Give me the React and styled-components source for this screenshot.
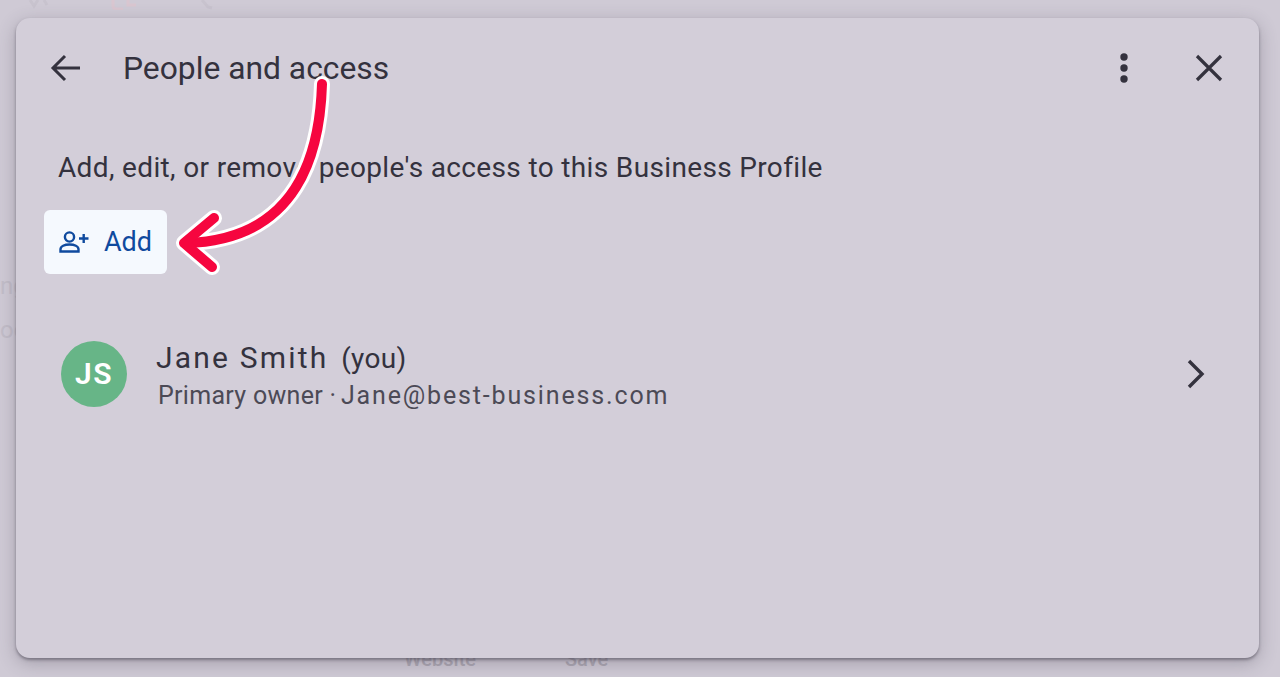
import styled, {createGlobalStyle} from 'styled-components';

const GlobalStyle = createGlobalStyle`
  html, body {
    margin: 0;
    padding: 0;
    background: #cfcad5;
    font-family: Roboto, "Liberation Sans", sans-serif;
  }
`;

const App = () => {
  return (
    <>
      <GlobalStyle />
      <Page>
        <Backdrop aria-hidden="true">
          <GhostTop width="260" height="10" viewBox="0 0 260 10" fill="none" strokeWidth="3">
            <path d="M30 0l4 6 4-6M44 0l3 5" stroke="#c8c3ce" />
            <path d="M113 0v6c0 2 2 3 4 3h6M128 0v5h8" stroke="#d9c6d0" />
            <path d="M202 0l6 7 4 1" stroke="#c8c3ce" />
          </GhostTop>
          <GhostLeft top={272}>ng</GhostLeft>
          <GhostLeft top={316}>oo</GhostLeft>
          <GhostBottom left={404}>Website</GhostBottom>
          <GhostBottom left={565}>Save</GhostBottom>
        </Backdrop>
        <Panel>
          <Header>
            <IconButton aria-label="Back">
              <svg width="32" height="32" viewBox="0 0 32 32" fill="none" stroke="#34323e" strokeWidth="3">
                <path d="M30 16H3M15 4 3 16l12 12" />
              </svg>
            </IconButton>
            <Title>People and access</Title>
            <HeaderActions>
              <IconButton aria-label="More">
                <svg width="10" height="32" viewBox="0 0 10 32" fill="#34323e">
                  <circle cx="5" cy="5" r="3.7" />
                  <circle cx="5" cy="16" r="3.7" />
                  <circle cx="5" cy="27" r="3.7" />
                </svg>
              </IconButton>
              <IconButton aria-label="Close">
                <svg width="28" height="28" viewBox="0 0 28 28" fill="none" stroke="#34323e" strokeWidth="3.2">
                  <path d="M2 2l24 24M26 2 2 26" />
                </svg>
              </IconButton>
            </HeaderActions>
          </Header>
          <Description>Add, edit, or remove people's access to this Business Profile</Description>
          <AddButton>
            <svg width="30" height="22" viewBox="0 0 30 22" fill="none" stroke="#0f4a9e" strokeWidth="2.4">
              <circle cx="10.5" cy="6" r="4.6" />
              <path d="M1.5 20.5v-2.2c0-3 4-4.800 9-4.800s9 1.800 9 4.800v2.200z" />
              <path d="M20 7.500h9.500M24.700 3v9" />
            </svg>
            Add
          </AddButton>
          <PersonRow>
            <Avatar>JS</Avatar>
            <PersonInfo>
              <PersonName>
                Jane Smith <You>(you)</You>
              </PersonName>
              <PersonMeta>
                Primary owner · <Email>Jane@best-business.com</Email>
              </PersonMeta>
            </PersonInfo>
            <svg width="20" height="30" viewBox="0 0 20 30" fill="none" stroke="#34323e" strokeWidth="3.4">
              <path d="M3 2l13 13L3 28" />
            </svg>
          </PersonRow>
        </Panel>
        <Arrow width="1280" height="677" viewBox="0 0 1280 677" fill="none" strokeLinecap="round" strokeLinejoin="round">
          <g stroke="#fff" strokeWidth="16">
            <path d="M322 84C320 150 300 240 186 243" />
            <path d="M214 218 184 243 212 267" />
          </g>
          <g stroke="#f6063f" strokeWidth="10">
            <path d="M322 84C320 150 300 240 186 243" />
            <path d="M214 218 184 243 212 267" />
          </g>
        </Arrow>
      </Page>
    </>
  );
};

const Page = styled.div`
  position: relative;
  width: 1280px;
  height: 677px;
  box-sizing: border-box;
  padding: 18px 21px 19px 16px;
  overflow: hidden;
  background: #cfcad5;
`;

const Backdrop = styled.div`
  position: absolute;
  inset: 0;
`;

const GhostTop = styled.svg`
  position: absolute;
  left: 0;
  top: 0;
`;

const GhostLeft = styled.span`
  position: absolute;
  left: 0;
  top: ${(props) => props.top}px;
  font-size: 24px;
  color: #c2bdc8;
`;

const GhostBottom = styled.span`
  position: absolute;
  left: ${(props) => props.left}px;
  top: 647px;
  font-size: 20px;
  font-weight: 500;
  color: #aca7b3;
`;

const Panel = styled.div`
  position: relative;
  height: 640px;
  box-sizing: border-box;
  padding: 28px 28px 0;
  border-radius: 14px;
  background: #d3ced9;
  box-shadow: 0 2px 3px rgba(70, 65, 80, 0.5), 0 5px 18px rgba(70, 65, 80, 0.32);
`;

const Header = styled.div`
  display: flex;
  align-items: center;
  height: 44px;
  padding-left: 6px;
`;

const IconButton = styled.div`
  display: flex;
  align-items: center;
  justify-content: center;
`;

const Title = styled.h1`
  flex: 1;
  margin: 0 0 0 41px;
  font-size: 31.8px;
  font-weight: 400;
  color: #34323e;
`;

const HeaderActions = styled.div`
  display: flex;
  align-items: center;
  gap: 66px;
  padding-right: 8px;
`;

const Description = styled.p`
  margin: 60px 0 0 14px;
  font-size: 28px;
  line-height: 36px;
  font-weight: 400;
  letter-spacing: 0.35px;
  color: #34323e;
`;

const AddButton = styled.button`
  display: flex;
  align-items: center;
  gap: 15px;
  width: 123px;
  height: 64px;
  margin-top: 24px;
  padding: 0 0 0 15px;
  border: 0;
  border-radius: 6px;
  background: #f5f9fe;
  color: #0f4a9e;
  font-family: inherit;
  font-size: 27px;
  font-weight: 450;
`;

const PersonRow = styled.div`
  display: flex;
  align-items: center;
  margin: 60px 25px 0 17px;
`;

const Avatar = styled.div`
  display: flex;
  align-items: center;
  justify-content: center;
  width: 66px;
  height: 66px;
  border-radius: 50%;
  background: #67b587;
  color: #fff;
  font-size: 30px;
  font-weight: 600;
  letter-spacing: 1.5px;
`;

const PersonInfo = styled.div`
  flex: 1;
  margin-left: 29px;
  padding-top: 6px;
`;

const PersonName = styled.div`
  font-size: 30px;
  line-height: 36px;
  letter-spacing: 2.2px;
  color: #34323e;
`;

const You = styled.span`
  margin-left: 3px;
  font-size: 28px;
  letter-spacing: 0.3px;
`;

const PersonMeta = styled.div`
  margin: 2px 0 0 2px;
  font-size: 25px;
  line-height: 34px;
  letter-spacing: 0.3px;
  color: #4c4a56;
`;

const Email = styled.span`
  margin-left: -2px;
  letter-spacing: 1.85px;
`;

const Arrow = styled.svg`
  position: absolute;
  left: 0;
  top: 0;
  pointer-events: none;
`;

export default App;
